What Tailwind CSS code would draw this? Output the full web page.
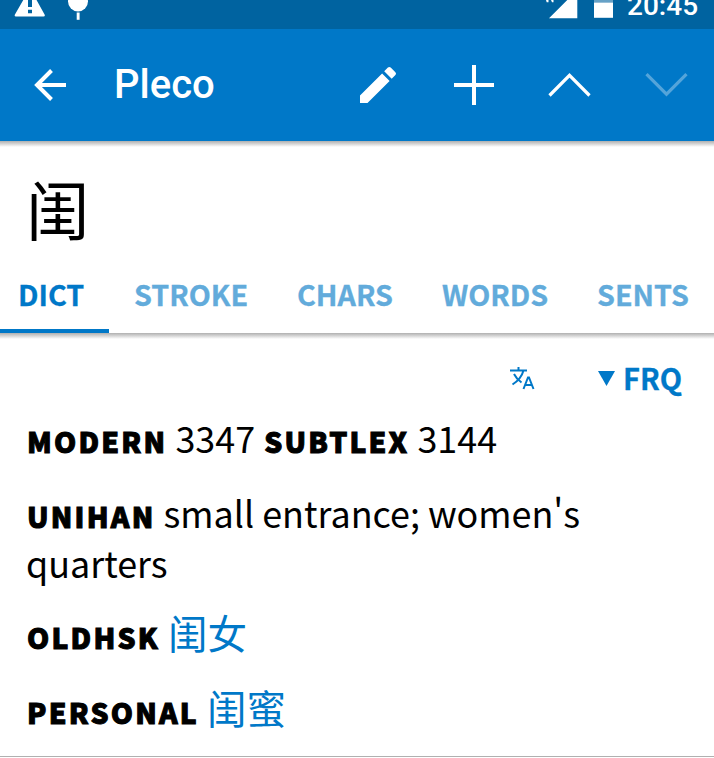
<!DOCTYPE html>
<html lang="zh-CN">
<head>
    <meta charset="UTF-8">
    <meta name="viewport" content="width=device-width, initial-scale=1.0">
    <title>Pleco</title>
    <script src="https://cdn.jsdelivr.net/npm/@tailwindcss/browser@4"></script>
</head>
<body class="bg-white overflow-hidden">
    <div class="w-[714px] h-[758px] flex flex-col overflow-hidden bg-white text-black font-['Noto_Sans_CJK_SC',sans-serif]">
        <!-- 状态栏 -->
        <div class="h-[29px] shrink-0 bg-[#0063a0] flex items-start justify-between overflow-hidden">
            <svg class="w-[110px] h-[29px]" viewBox="0 0 110 29" fill="#fff">
                <path fill-rule="evenodd" d="M29-10 14.8 14.8Q14.2 16.5 16 16.5H43.5Q45.3 16.5 44.7 14.8L31-10ZM28-5H32V7H28ZM28 9.700H32V13.300H28Z"/>
                <circle cx="78" cy="1.500" r="10"/>
                <path d="M76.700 12.500h2.900v7.300h-2.900z"/>
            </svg>
            <div class="flex items-start">
                <svg class="w-[80px] h-[29px]" viewBox="540 0 80 29" fill="#fff">
                    <path d="M546 0h2.500v2.200h-1.800zM551 0h2.500v2.200H552zM577.300-10V18.200H549z"/>
                    <path d="M594 2.500h19v15.300h-19z"/>
                    <path opacity=".4" d="M594-5h19v7.500h-19z"/>
                </svg>
                <div class="w-[94px] h-[29px] pl-[7px] font-[Roboto] font-medium text-[28px] leading-[11px] text-white">20:45</div>
            </div>
        </div>

        <!-- 标题栏 -->
        <div class="h-[112px] shrink-0 bg-[#0078c8] flex items-center text-white">
            <svg class="w-[114px] h-[112px]" viewBox="0 29 114 112" fill="none" stroke="#fff" stroke-width="4">
                <path d="M66 85H37M51.500 99.500 37 85 51.500 70.500"/>
            </svg>
            <h1 class="w-[216px] pb-px font-[Roboto] font-medium text-[40px]">Pleco</h1>
            <svg class="w-[384px] h-[112px]" viewBox="330 29 384 112" fill="none" stroke="#fff">
                <path fill="#fff" stroke="none" d="M360 95.500V103h7.500L389.600 80.900l-7.500-7.500ZM395.400 75.100a2 2 0 0 0 0-2.800L390.700 67.600a2 2 0 0 0-2.800 0L384.200 71.300l7.500 7.500Z"/>
                <path stroke-width="4" d="M474 65v40M454 85h40"/>
                <path stroke-width="3.200" d="M549.500 95.500 569.500 75.300 589.500 95.500"/>
                <path stroke-width="3.200" opacity=".33" d="M646.500 74.200 666.500 94.200 686.500 74.200"/>
            </svg>
        </div>
        <div class="h-[6px] shrink-0 bg-linear-to-b from-[#b0b0b0] to-white"></div>

        <!-- 字头 -->
        <div class="h-[111px] shrink-0 pl-[26px] pt-[5px] text-[63.5px] leading-[111px]">闺</div>

        <!-- 标签页 -->
        <div class="h-[75px] shrink-0 flex text-[28.7px] leading-[72px] font-bold text-[#62abdb] [-webkit-text-stroke:0.3px]">
            <div class="w-[109px] h-[75px] pl-[18px] border-b-4 border-[#0078c8] text-[#0078c8]">DICT</div>
            <div class="w-[163px] pl-[25px]">STROKE</div>
            <div class="w-[145px] pl-[25px]">CHARS</div>
            <div class="w-[155px] pl-[25px]">WORDS</div>
            <div class="w-[142px] pl-[25px]">SENTS</div>
        </div>
        <div class="h-[6px] shrink-0 bg-linear-to-b from-[#b0b0b0] to-white"></div>

        <!-- 排序 -->
        <div class="h-[73px] shrink-0 flex items-center justify-end pr-[32px] pt-[5px] text-[#0078c8]">
            <svg class="w-[26px] h-[24px] mr-[63px]" viewBox="0 0 26 24" fill="none" stroke="currentColor" stroke-width="2">
                <path d="M1 4.500H18M9.500 1V4.500M14.500 4.500C13 10 9 15 3.500 18.500M5 8C7 12 9 14 12.500 16.500M14.500 23 19 11.500H20L24.500 23M16 19H23"/>
            </svg>
            <svg class="w-[17px] h-[15px] mr-[8px]" viewBox="0 0 17 15" fill="currentColor"><path d="M0 0h17L8.500 15z"/></svg>
            <div class="text-[29px] leading-[50px] pb-[3px] font-bold [-webkit-text-stroke:0.3px]">FRQ</div>
        </div>

        <!-- 释义 -->
        <div class="pl-[26px] text-[35.9px] leading-[50px]">
            <p class="mb-[25px]"><b class="pl-px text-[28.3px] leading-0 font-black tracking-[2.2px] [-webkit-text-stroke:1px]">MODERN</b> 3347 <b class="pl-px text-[28.3px] leading-0 font-black tracking-[2.2px] [-webkit-text-stroke:1px]">SUBTLEX</b> 3144</p>
            <p class="mb-[21px]"><b class="pl-px text-[28.3px] leading-0 font-black tracking-[2.2px] [-webkit-text-stroke:1px]">UNIHAN</b> small entrance; women's<br>quarters</p>
            <p class="mb-[25px]"><b class="pl-px text-[28.3px] leading-0 font-black tracking-[2.2px] [-webkit-text-stroke:1px]">OLDHSK</b> <span class="text-[39.5px] leading-0 text-[#0078c8]">闺女</span></p>
            <p><b class="pl-px text-[28.3px] leading-0 font-black tracking-[2.2px] [-webkit-text-stroke:1px]">PERSONAL</b> <span class="text-[39.5px] leading-0 text-[#0078c8]">闺蜜</span></p>
        </div>
        <div class="mt-auto mb-px h-px shrink-0 bg-[#b0b0b0]"></div>
    </div>
</body>
</html>
